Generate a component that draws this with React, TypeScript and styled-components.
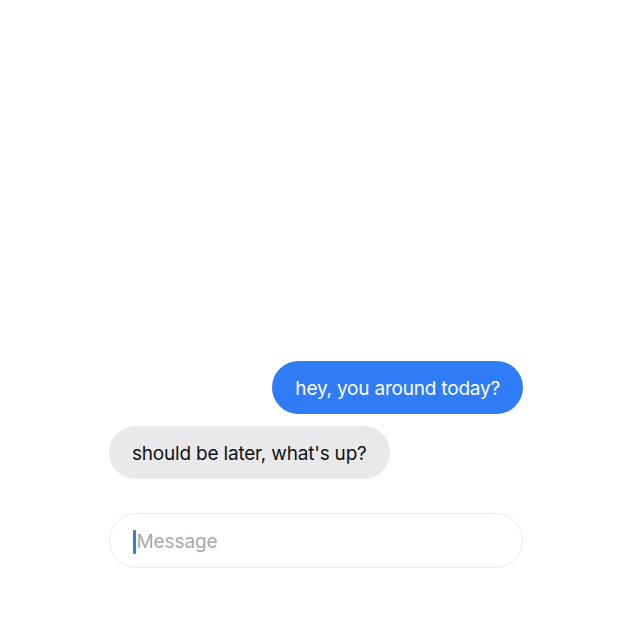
import React from "react";
import styled, { createGlobalStyle } from "styled-components";

const Global = createGlobalStyle`
  html, body { margin: 0; padding: 0; background: #ffffff; }
  body { font-family: Inter, "Noto Sans", sans-serif; -webkit-font-smoothing: antialiased; }
`;

const Page = styled.div`
  height: 635px;
  display: flex;
  flex-direction: column;
  justify-content: flex-end;
  padding: 0 0 67px 109px;
  box-sizing: border-box;
`;

const Thread = styled.div`
  width: 414px;
  display: flex;
  flex-direction: column;
`;

const Messages = styled.div`
  display: flex;
  flex-direction: column;
  gap: 12px;
  margin-bottom: 34px;
`;

const Bubble = styled.div<{ $mine?: boolean }>`
  align-self: ${(p) => (p.$mine ? "flex-end" : "flex-start")};
  background: ${(p) => (p.$mine ? "#2f7cf6" : "#e9e9eb")};
  color: ${(p) => (p.$mine ? "#ffffff" : "#111111")};
  height: 53px;
  display: flex;
  align-items: center;
  padding: 1px 23px 0;
  box-sizing: border-box;
  border-radius: 27px;
  font-size: 19px;
  letter-spacing: -0.2px;
  white-space: nowrap;
`;

const InputBox = styled.div`
  height: 55px;
  border: 1px solid #ececec;
  border-radius: 28px;
  box-sizing: border-box;
  display: flex;
  align-items: center;
  padding: 2px 0 0 23px;
`;

const Caret = styled.span`
  width: 2.5px;
  height: 24px;
  background: #2f7cf6;
  border-radius: 1px;
  margin-right: 1px;
`;

const Placeholder = styled.span`
  font-size: 19px;
  letter-spacing: -0.1px;
  color: #a9a9ad;
`;

export default function App() {
  return (
    <>
      <Global />
      <Page>
        <Thread>
          <Messages>
            <Bubble $mine>hey, you around today?</Bubble>
            <Bubble>should be later, what's up?</Bubble>
          </Messages>
          <InputBox>
            <Caret />
            <Placeholder>Message</Placeholder>
          </InputBox>
        </Thread>
      </Page>
    </>
  );
}
